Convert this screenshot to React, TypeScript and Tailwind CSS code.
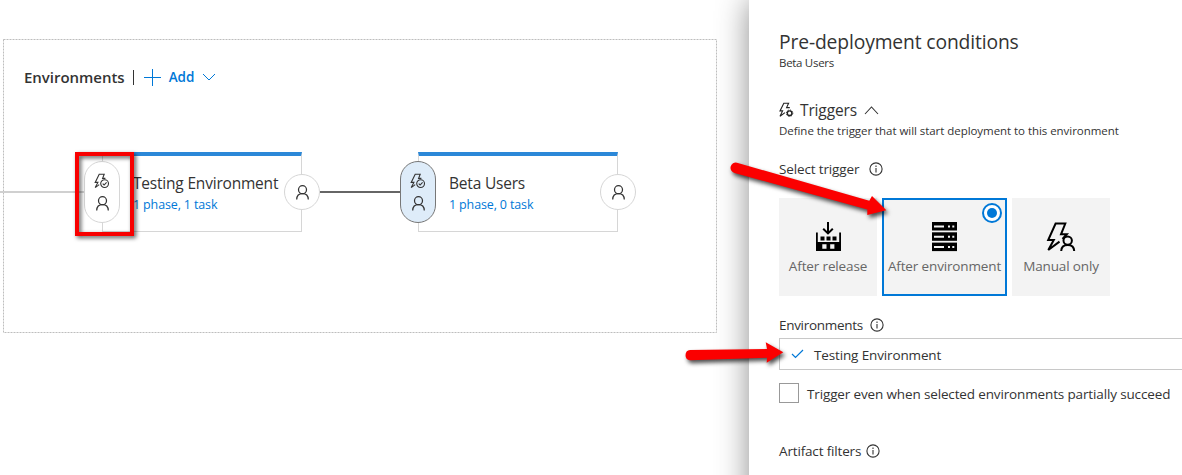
import React from "react";

function Person({ className = "" }: { className?: string }) {
  return (
    <svg className={className} width="13" height="15" viewBox="0 0 13 15" fill="none" stroke="#333" strokeWidth="1.25">
      <circle cx="6.5" cy="4.7" r="4" />
      <path d="M0.7 14.5C0.8 10.8 3 8.7 6.5 8.7S12.2 10.8 12.3 14.5" />
    </svg>
  );
}

function BoltCheck() {
  return (
    <svg width="16" height="16" viewBox="0 0 16 16" fill="none" stroke="#333" strokeWidth="1.1">
      <path d="M11.4 5.4H8.6L10.2 1.2H5.2L1.2 9.4H3.9L1.2 14.6L5.2 11.6" />
      <circle cx="10.6" cy="10.6" r="3.9" />
      <path d="M8.7 10.7L10.1 12L12.6 9.3" />
    </svg>
  );
}

function BoltGear() {
  return (
    <svg width="15" height="16" viewBox="0 0 15 16" fill="none" stroke="#222" strokeWidth="1.1">
      <path d="M10.8 5.6H7.6L9.6 1.3H4.8L1 8.9H3.6L1 14.3L6 10.6" />
      <circle cx="10.6" cy="11.2" r="2.3" strokeWidth="1.4" />
      <circle cx="10.6" cy="11.2" r="3.2" strokeWidth="1" strokeDasharray="1.25 1.26" />
    </svg>
  );
}

function BoltPerson() {
  return (
    <svg width="30" height="30" viewBox="0 0 30 30" fill="none" stroke="#000" strokeWidth="2">
      <path d="M16.5 17L20.8 12.3H15L19.3 1.5H9.6L2.2 18H7.8L2.3 28L13.5 19.6" />
      <circle cx="21.7" cy="18.6" r="4.2" />
      <path d="M15.2 29C15.3 25 17.5 22.9 21.7 22.9S28.1 25 28.2 29" />
    </svg>
  );
}

function ReleaseIcon() {
  return (
    <svg width="25" height="30" viewBox="0 0 25 30">
      <path d="M12 0V11M7.2 6.8L12 11.4L16.8 6.8" fill="none" stroke="#000" strokeWidth="2" />
      <path
        fillRule="evenodd"
        d="M0 10.5H1.8V20H23.2V10.5H25V29H0ZM6.3 22.3V26.8H10.5V22.3ZM14.2 22.3V26.8H18.4V22.3Z"
      />
      <path d="M4.5 14.5h4v4h-4zM10.5 14.5h4v4h-4zM16.5 14.5h4v4h-4z" />
    </svg>
  );
}

function ServerIcon() {
  return (
    <svg width="25" height="30" viewBox="0 0 25 30">
      {[0, 10.3, 20.6].map((y) => (
        <g key={y} transform={`translate(0 ${y})`}>
          <rect width="25" height="8.5" />
          <path d="M2 3.4h10v2H2zM16 3.4h2v2h-2zM20.3 3.4h2v2h-2z" fill="#f3f3f3" />
        </g>
      ))}
    </svg>
  );
}

function Info() {
  return (
    <svg width="14" height="14" viewBox="0 0 14 14" fill="none" stroke="#333" strokeWidth="1.1">
      <circle cx="7" cy="7" r="6.1" />
      <path d="M7 6V10.5M7 3.6V4.9" />
    </svg>
  );
}

type NodeProps = { place: string; name: string; tasks: string; pill: string };

function EnvironmentNode({ place, name, tasks, pill }: NodeProps) {
  return (
    <div className={`absolute top-[152px] h-20 w-[200px] border border-t-4 border-[#d6d6d6] border-t-[#2b88d8] bg-white ${place}`}>
      <div className="flex flex-col pt-[16px] pl-[30px] whitespace-nowrap">
        <span className="text-[15.5px] leading-[22px] tracking-[-0.2px] text-[#333]">{name}</span>
        <span className="text-[12.5px] leading-[22px] tracking-[-0.14px] text-[#0078d7]">{tasks}</span>
      </div>
      <div className={`absolute top-[5px] -left-[19px] flex h-[62px] w-9 flex-col items-center rounded-full border pt-[11px] ${pill}`}>
        <BoltCheck />
        <Person className="mt-[7px]" />
      </div>
      <div className="absolute top-[18px] -right-[19px] flex size-9 items-center justify-center rounded-full border border-[#d6d6d6] bg-white">
        <Person />
      </div>
    </div>
  );
}

function Card({ label, icon, className }: { label: string; icon: React.ReactNode; className: string }) {
  return (
    <div className={`relative flex h-[98px] flex-col items-center bg-[#f3f3f3] ${className}`}>
      {icon}
      <span className="mt-[3px] text-[13.5px] leading-[22px] tracking-[-0.14px] whitespace-nowrap text-[#666]">{label}</span>
    </div>
  );
}

export default function App() {
  return (
    <div className="relative flex h-[475px] w-[1182px] overflow-hidden bg-white font-['Open_Sans','Noto_Sans',sans-serif] text-[#333]">
      <main className="relative w-[749px] shrink-0 pt-[39px] pl-[3px]">
        <section className="relative h-[294px] w-[714px] pt-px pl-px">
          <svg className="absolute inset-0" width="714" height="294" fill="none" stroke="#bdbdbd" strokeDasharray="2 1">
            <rect x="0.5" y="0.5" width="713" height="293" />
          </svg>
          <div className="mt-[24px] flex h-[26px] items-center pl-5">
            <h2 className="w-[100px] text-[15px] font-semibold tracking-[-0.03px] whitespace-nowrap">Environments</h2>
            <span className="ml-[9px] h-[15px] w-px bg-[#333]" />
            <button className="flex items-center text-[13.5px] font-semibold text-[#0078d7]">
              <svg className="ml-[10px]" width="17" height="17" viewBox="0 0 17 17" fill="none" stroke="#0078d7">
                <path d="M0 8.5H17M8.5 0V17" />
              </svg>
              <span className="ml-[7px] w-[27px]">Add</span>
              <svg className="ml-[7px]" width="14" height="8" viewBox="0 0 14 8" fill="none" stroke="#0078d7">
                <path d="M1 1L7 7L13 1" />
              </svg>
            </button>
          </div>
        </section>
        <div className="absolute top-[191px] left-0 h-[2px] w-[84px] bg-[#d0d0d0]" />
        <EnvironmentNode place="left-[102px]" name="Testing Environment" tasks="1 phase, 1 task" pill="border-[#d6d6d6] bg-white" />
        <EnvironmentNode place="left-[418px]" name="Beta Users" tasks="1 phase, 0 task" pill="border-[#777] bg-[#deecf9]" />
        <div className="absolute top-[191px] left-[320px] h-[2px] w-20 bg-[#666]" />
        <div className="absolute top-[152px] left-[75px] h-[84px] w-[59px] border-4 border-[#f80000] drop-shadow-[2px_2px_2px_rgba(0,0,0,0.65)]" />
      </main>

      <aside className="flex h-[560px] w-[433px] shrink-0 flex-col bg-white pt-7 pl-[30px] whitespace-nowrap tracking-[-0.14px] shadow-[0_0_30px_rgba(0,0,0,0.45)]">
        <h1 className="h-7 text-[19.3px] leading-7">Pre-deployment conditions</h1>
        <p className="h-[14px] text-[11.5px] leading-[14px] tracking-[-0.3px]">Beta Users</p>
        <div className="mt-7 flex h-6 items-center">
          <BoltGear />
          <span className="ml-[6px] w-[58px] pt-[2px] text-[15.5px]">Triggers</span>
          <svg className="ml-[6px]" width="15" height="9" viewBox="0 0 15 9" fill="none" stroke="#333" strokeWidth="1.1">
            <path d="M1 8L7.5 1L14 8" />
          </svg>
        </div>
        <p className="h-[18px] text-[11.5px] leading-[18px] tracking-[-0.05px]">Define the trigger that will start deployment to this environment</p>
        <div className="mt-[19px] flex h-5 items-center text-[13.5px]">
          <span className="w-[90px]">Select trigger</span>
          <Info />
        </div>
        <div className="mt-[19px] flex gap-[5px]">
          <Card label="After release" icon={<ReleaseIcon />} className="w-[98px] pt-6" />
          <Card
            label="After environment"
            icon={
              <>
                <ServerIcon />
                <span className="absolute top-[3px] right-[3px] flex size-5 items-center justify-center rounded-full border-2 border-[#0078d7] bg-white">
                  <span className="size-[10px] rounded-full bg-[#0078d7]" />
                </span>
              </>
            }
            className="w-[125px] border-2 border-[#0078d7] pt-[22px]"
          />
          <Card label="Manual only" icon={<BoltPerson />} className="w-[98px] pt-6" />
        </div>
        <div className="mt-[19px] flex h-5 items-center text-[13.5px]">
          <span className="w-[91px] tracking-[-0.3px]">Environments</span>
          <Info />
        </div>
        <div className="mt-[3px] flex h-8 items-center border border-r-0 border-[#c8c8c8] pl-[11px] text-[13.5px]">
          <svg width="13" height="10" viewBox="0 0 13 10" fill="none" stroke="#0078d7" strokeWidth="1.2">
            <path d="M1 5L4.5 8.5L12 1" />
          </svg>
          <span className="ml-[10px] pt-[2px]">Testing Environment</span>
        </div>
        <label className="mt-[13px] flex h-5 items-center text-[13.5px]">
          <span className="size-5 border border-[#999]" />
          <span className="ml-2 pt-[2px]">Trigger even when selected environments partially succeed</span>
        </label>
        <div className="mt-[38px] flex h-5 items-center text-[13.5px]">
          <span className="w-[87px] tracking-[-0.16px]">Artifact filters</span>
          <Info />
        </div>
      </aside>

      <svg
        className="pointer-events-none absolute inset-0 drop-shadow-[2px_3px_2px_rgba(0,0,0,0.7)]"
        width="1182"
        height="475"
        viewBox="0 0 1182 475"
        fill="#fb0000"
      >
        <path d="M737 162.7L869.3 200.7L872 196L886.3 210.3L867.3 215L867.3 209.5L734.5 173A5.3 5.3 0 0 1 737 162.7Z" />
        <path d="M690 350L767 349L765.7 342.3L783.3 352.3L766.7 362.7L767 357.7L690 360.3A5.2 5.2 0 0 1 690 350Z" />
      </svg>
    </div>
  );
}
